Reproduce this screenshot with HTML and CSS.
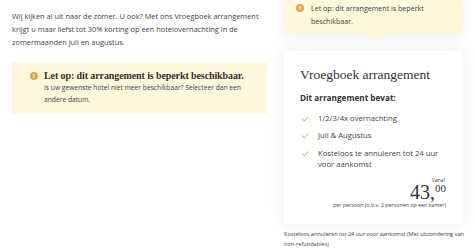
FILE: index.html
```html
<!DOCTYPE html>
<html lang="nl">
<head>
  <meta charset="UTF-8">
  <title>Vroegboek arrangement</title>
  <link rel="stylesheet" href="styles.css">
</head>
<body>

  <div class="page">
    <div class="main">
      <p class="intro">
        Wij kijken al uit naar de zomer. U ook? Met ons Vroegboek arrangement
        krijgt u maar liefst tot 30% korting op een hotelovernachting in de
        zomermaanden juli en augustus.
      </p>

      <div class="notice">
        <span class="info-icon">!</span>
        <div>
          <h3>Let op: dit arrangement is beperkt beschikbaar.</h3>
          <p>Is uw gewenste hotel niet meer beschikbaar? Selecteer dan een andere datum.</p>
        </div>
      </div>
    </div>

    <aside class="sidebar">
      <div class="tip">
        <span class="info-icon">!</span>
        <p>Let op: dit arrangement is beperkt beschikbaar.</p>
      </div>

      <div class="card">
        <h2>Vroegboek arrangement</h2>
        <h4>Dit arrangement bevat:</h4>
        <ul class="checks">
          <li>1/2/3/4x overnachting</li>
          <li>Juli &amp; Augustus</li>
          <li>Kosteloos te annuleren tot 24 uur voor aankomst</li>
        </ul>

        <div class="price">
          <span class="from">Vanaf</span>
          <span class="amount">43,<sup>00</sup></span>
          <span class="per">per persoon (o.b.v. 2 personen op een kamer)</span>
        </div>
      </div>

      <p class="small-print">Kosteloos annuleren tot 24 uur voor aankomst (Met uitzondering van non-refundables)</p>
    </aside>
  </div>

</body>
</html>
```

FILE: styles.css
```css
* {
  margin: 0;
  padding: 0;
  box-sizing: border-box;
}

body {
  font-family: "Open Sans", sans-serif;
  color: #444;
  background: #fff;
  overflow: hidden;
}

.page {
  display: flex;
  width: 475px;
}

.main {
  width: 268px;
  padding: 10px 1px 0 12px;
}

.intro {
  font-size: 7.4px;
  line-height: 13px;
}

.notice {
  display: flex;
  gap: 6px;
  margin-top: 13px;
  padding: 8px 8px 8px 18px;
  background: #fdf7dc;
}

.notice h3 {
  font-family: "Liberation Serif", serif;
  font-weight: 700;
  font-size: 10px;
  letter-spacing: -0.1px;
  color: #333;
  line-height: 12px;
  white-space: nowrap;
}

.notice p {
  max-width: 205px;
  font-size: 6.7px;
  line-height: 12px;
}

.info-icon {
  flex: none;
  width: 8px;
  height: 8px;
  margin-top: 2px;
  border-radius: 50%;
  background: #dcaa4a;
  color: #fff;
  font-size: 6px;
  font-weight: 700;
  line-height: 8px;
  text-align: center;
}

.sidebar {
  width: 194px;
  padding-left: 16px;
}

.tip {
  position: relative;
  display: flex;
  gap: 7px;
  width: 178px;
  margin-top: -4px;
  padding: 6px 20px 6px 12px;
  background: #fdf7dc;
  box-shadow: 0 2px 14px rgba(0, 0, 0, 0.07);
}

.tip::after {
  content: "";
  position: absolute;
  left: 78px;
  bottom: -6px;
  border: 12px solid transparent;
  border-bottom: 0;
  border-top: 6px solid #fdf7dc;
}

.tip p {
  font-size: 7.1px;
  line-height: 13px;
}

.card {
  width: 178px;
  margin-top: 17px;
  padding: 15px 16px 15px 16px;
  background: #fff;
  box-shadow: 0 0 18px rgba(0, 0, 0, 0.08);
}

.card h2 {
  font-family: "Liberation Serif", serif;
  font-weight: 400;
  font-size: 13.5px;
  color: #333;
  line-height: 18px;
}

.card h4 {
  margin-top: 9px;
  font-size: 8.2px;
  font-weight: 700;
  color: #333;
  line-height: 10px;
}

.checks {
  list-style: none;
  margin-top: 9.5px;
}

.checks li {
  position: relative;
  padding-left: 18px;
  font-size: 7.7px;
  line-height: 11.5px;
  margin-bottom: 6px;
}

.checks li:last-child {
  margin-bottom: 0;
}

.checks li::before {
  content: "";
  position: absolute;
  left: 3px;
  top: 2px;
  width: 3px;
  height: 5px;
  border: solid #a6d07c;
  border-width: 0 1px 1px 0;
  transform: rotate(40deg);
}

.price {
  display: flex;
  flex-direction: column;
  align-items: flex-end;
  margin-top: 6px;
}

.from {
  font-size: 5px;
  line-height: 6px;
  margin-right: 1px;
}

.amount {
  font-family: "Liberation Serif", serif;
  font-size: 20px;
  line-height: 18px;
  color: #333;
}

.amount sup {
  font-size: 11px;
  line-height: 0;
  vertical-align: 7px;
}

.per {
  margin-top: 1.5px;
  font-size: 5.3px;
  line-height: 7px;
}

.small-print {
  width: 184px;
  margin-top: 5px;
  font-size: 5.6px;
  line-height: 10px;
}
```
